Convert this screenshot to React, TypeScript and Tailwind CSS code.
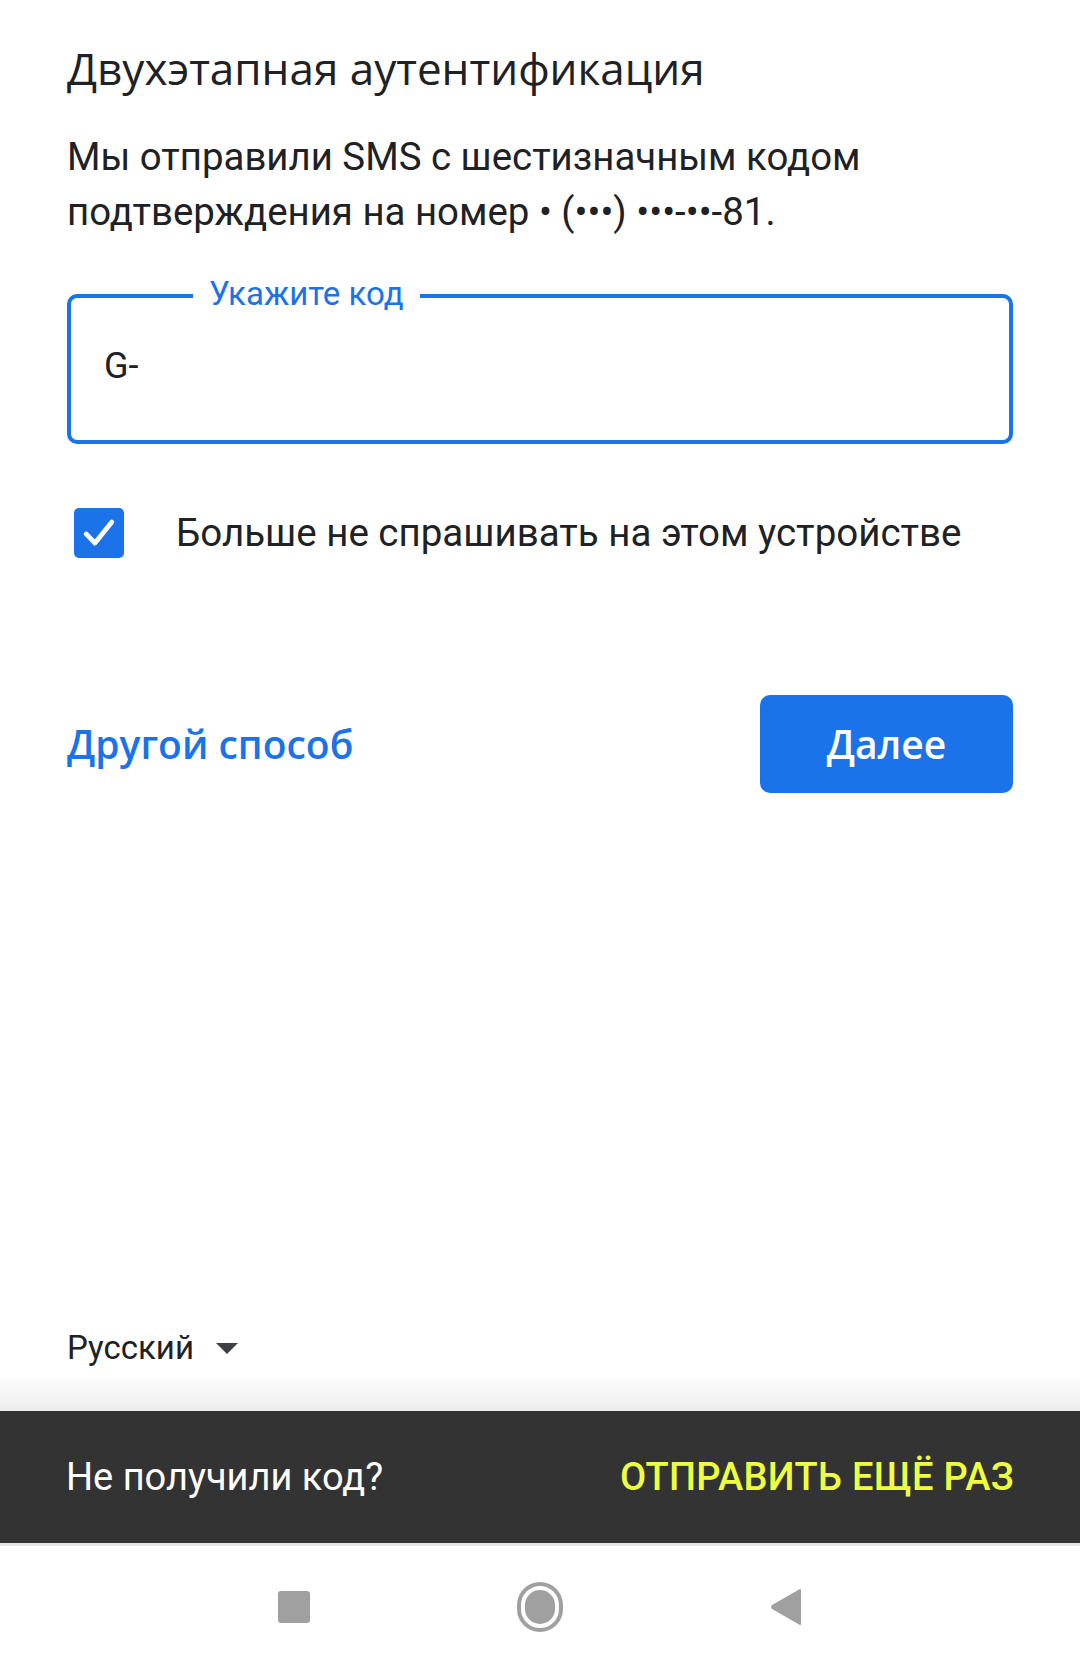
import { useState } from 'react';

const sans = "font-['Roboto','Noto_Sans',sans-serif]";
const display = "font-['Open_Sans','Roboto',sans-serif]";

function CheckIcon() {
  return (
    <svg viewBox="0 0 24 24" className="h-[44px] w-[44px]" fill="none" stroke="white" strokeWidth="2.6" strokeLinecap="round" strokeLinejoin="round">
      <path d="M5 12.5l4.8 5L19 6" />
    </svg>
  );
}

function NavBar() {
  return (
    <div className="flex h-[130px] items-center justify-center gap-[207px] border-t-[3px] border-[#e6e6e6] bg-white pb-[6px]">
      <span className="h-[32px] w-[32px] rounded-[3px] bg-[#a0a0a0]" />
      <span className="flex h-[50px] w-[46px] items-center justify-center rounded-full border-[4px] border-[#a0a0a0]">
        <span className="h-[34px] w-[30px] rounded-full bg-[#a0a0a0]" />
      </span>
      <svg viewBox="0 0 32 38" className="h-[38px] w-[32px]">
        <path d="M30 2 L3 17.5 Q1 19 3 20.5 L30 36 Z" fill="#a0a0a0" stroke="#a0a0a0" strokeWidth="2" strokeLinejoin="round" />
      </svg>
    </div>
  );
}

export default function App() {
  const [remember, setRemember] = useState(true);
  const [code, setCode] = useState('G-');

  return (
    <div className={`${sans} flex h-[1673px] w-[1080px] flex-col bg-white text-[#202124]`}>
      <main className="flex-1 px-[67px] pt-[40px]">
        <h1 className={`${display} text-[44px] leading-[56px] font-normal text-[#202124]`}>
          Двухэтапная аутентификация
        </h1>
        <p className="mt-[33px] text-[38.4px] leading-[55px] text-[#202124]">
          Мы отправили SMS с шестизначным кодом подтверждения на номер • (•••) •••-••-81.
        </p>

        <div className="relative mt-[55px] h-[150px] rounded-[10px] border-[4px] border-[#1a73e8]">
          <span className="absolute -top-[26px] left-[122px] bg-white px-[16px] text-[33px] leading-[44px] text-[#1a73e8]">
            Укажите код
          </span>
          <input
            value={code}
            onChange={(e) => setCode(e.target.value)}
            className="h-full w-full bg-transparent px-[33px] pb-[6px] text-[36px] text-[#202124] outline-none"
          />
        </div>

        <label className="mt-[64px] flex items-center gap-[52px]">
          <button
            type="button"
            onClick={() => setRemember(!remember)}
            className="ml-[7px] flex h-[50px] w-[50px] items-center justify-center rounded-[5px] bg-[#1a73e8]"
          >
            {remember && <CheckIcon />}
          </button>
          <span className="text-[38.5px] leading-[48px] text-[#202124]">Больше не спрашивать на этом устройстве</span>
        </label>

        <div className="mt-[137px] flex items-center justify-between">
          <a href="#" className={`${display} text-[39px] font-semibold text-[#1a73e8]`}>
            Другой способ
          </a>
          <button className={`${display} h-[98px] w-[253px] rounded-[10px] bg-[#1a73e8] text-[39px] font-semibold text-white`}>
            Далее
          </button>
        </div>
      </main>

      <div className="flex items-center gap-[22px] px-[67px] pb-[7px]">
        <span className="text-[33px] leading-[40px] text-[#202124]">Русский</span>
        <span className="h-0 w-0 border-x-[11px] border-t-[11px] border-x-transparent border-t-[#3c4043]" />
      </div>

      <div className="h-[36px] bg-gradient-to-b from-white to-[#ececec]" />
      <div className="flex h-[132px] items-center justify-between bg-[#333333] px-[66px]">
        <span className="text-[38px] text-white">Не получили код?</span>
        <button className="text-[38px] font-medium tracking-[0.3px] text-[#eeff41]">ОТПРАВИТЬ ЕЩЁ РАЗ</button>
      </div>

      <NavBar />
    </div>
  );
}
